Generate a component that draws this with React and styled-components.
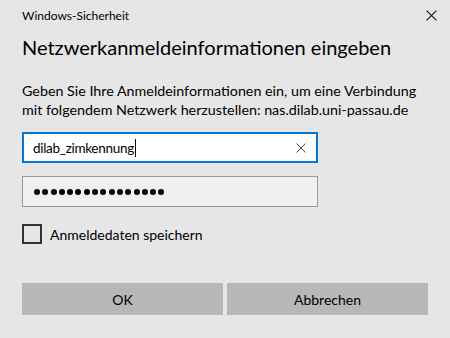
import React from "react";
import styled, { createGlobalStyle } from "styled-components";

const GlobalStyle = createGlobalStyle`
	html, body {
		margin: 0;
		padding: 0;
		background: #e6e6e6;
	}
	body {
		font-family: Lato, "Noto Sans", "Liberation Sans", sans-serif;
		color: #000;
	}
`;

const StyledDialog = styled.div`
	width: 450px;
	height: 338px;
	box-sizing: border-box;
	padding: 0 22px;
	display: flex;
	flex-direction: column;
	background: #e6e6e6;
	overflow: hidden;
`;

const StyledTitleBar = styled.div`
	height: 30px;
	display: flex;
	align-items: center;
	justify-content: space-between;
	font-size: 12px;
	color: #000;
`;

const StyledClose = styled.div`
	width: 12px;
	height: 12px;
	margin-right: -9px;
	display: flex;
	align-items: center;
	justify-content: center;
`;

const StyledHeading = styled.h1`
	margin: 3px 0 0;
	font-size: 20px;
	font-weight: 400;
	line-height: 28px;
	white-space: nowrap;
	color: #000;
`;

const StyledText = styled.p`
	margin: 20px 0 0;
	font-size: 14.3px;
	line-height: 19px;
	white-space: nowrap;
`;

const StyledField = styled.div`
	width: 296px;
	height: 31px;
	box-sizing: border-box;
	margin-top: ${p => p.$top}px;
	display: flex;
	align-items: center;
	padding: 0 10px 0 9px;
	border: ${p => (p.$focused ? "2px solid #0078d7" : "1px solid #999")};
	background: ${p => (p.$focused ? "#fff" : "#f0f0f0")};
	font-size: 13.5px;
	letter-spacing: -0.3px;
`;

const StyledValue = styled.span`
	flex: 1;
	display: flex;
	align-items: center;
`;

const StyledCaret = styled.span`
	width: 1px;
	height: 18px;
	background: #000;
	margin-left: 1px;
`;

const StyledDots = styled.span`
	display: flex;
	gap: 2.3px;
	margin-left: 2px;
`;

const StyledDot = styled.span`
	width: 6px;
	height: 6px;
	border-radius: 50%;
	background: #000;
`;

const StyledCheckRow = styled.label`
	margin-top: 17px;
	display: flex;
	align-items: center;
	gap: 8px;
	font-size: 14px;
`;

const StyledBox = styled.span`
	width: 20px;
	height: 20px;
	box-sizing: border-box;
	border: 2px solid #333;
`;

const StyledButtons = styled.div`
	margin-top: 39px;
	display: grid;
	grid-template-columns: 1fr 1fr;
	gap: 4px;
`;

const StyledButton = styled.button`
	height: 32px;
	border: none;
	background: #b7b7b7;
	font-family: inherit;
	font-size: 14px;
	color: #000;
`;

const Cross = ({ size, color }) => (
	<svg width={size} height={size} viewBox="0 0 10 10">
		<path d="M0.5 0.5 L9.5 9.5 M9.5 0.5 L0.5 9.5" stroke={color} strokeWidth="1" />
	</svg>
);

const App = () => (
	<>
		<GlobalStyle />
		<StyledDialog>
			<StyledTitleBar>
				<span>Windows-Sicherheit</span>
				<StyledClose>
					<Cross size={11} color="#111" />
				</StyledClose>
			</StyledTitleBar>
			<StyledHeading>Netzwerkanmeldeinformationen eingeben</StyledHeading>
			<StyledText>
				Geben Sie Ihre Anmeldeinformationen ein, um eine Verbindung
				<br />
				mit folgendem Netzwerk herzustellen: nas.dilab.uni-passau.de
			</StyledText>
			<StyledField $focused $top={13}>
				<StyledValue>
					dilab_zimkennung
					<StyledCaret />
				</StyledValue>
				<Cross size={10} color="#444" />
			</StyledField>
			<StyledField $top={13}>
				<StyledDots>
					{Array.from({ length: 16 }, (_, i) => (
						<StyledDot key={i} />
					))}
				</StyledDots>
			</StyledField>
			<StyledCheckRow>
				<StyledBox />
				Anmeldedaten speichern
			</StyledCheckRow>
			<StyledButtons>
				<StyledButton>OK</StyledButton>
				<StyledButton>Abbrechen</StyledButton>
			</StyledButtons>
		</StyledDialog>
	</>
);

export default App;
